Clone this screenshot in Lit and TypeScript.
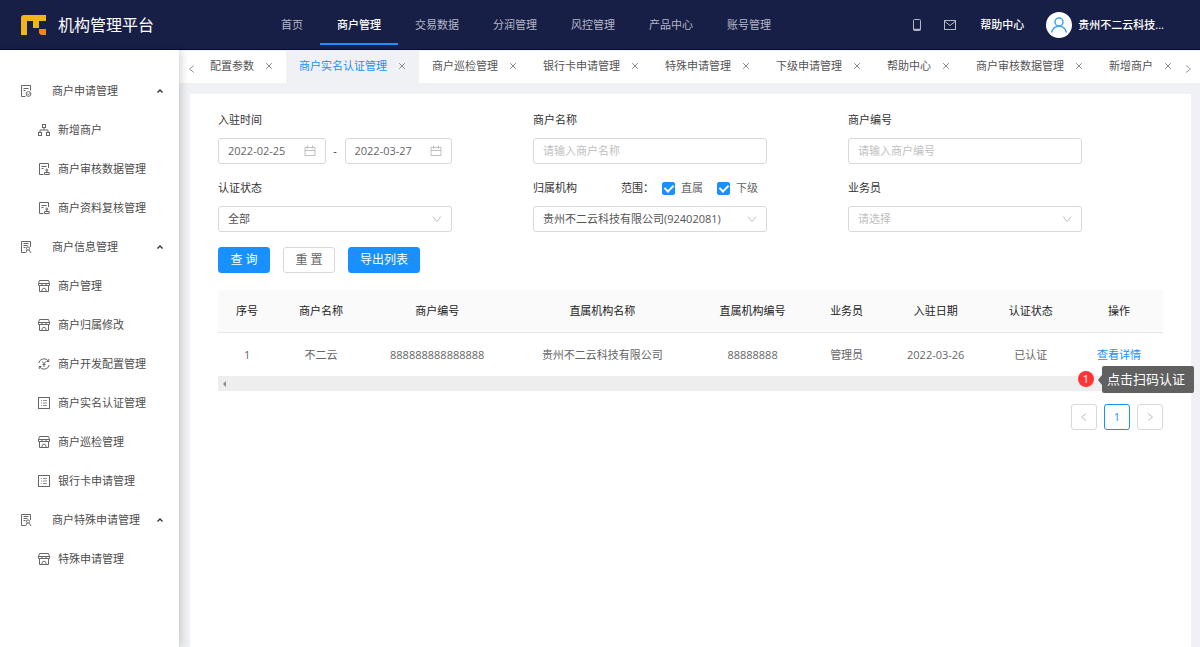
import { LitElement, html, css, svg } from "lit";
import { customElement } from "lit/decorators.js";
import { classMap } from "lit/directives/class-map.js";

const line = (body: unknown, size = 12) => html`<svg
  class="ico" width=${size} height=${size} viewBox="0 0 12 12" fill="none"
  stroke="currentColor" stroke-width="1" aria-hidden="true">${body}</svg>`;

const icons: Record<string, unknown> = {
  audit: line(svg`<path d="M5.500 11.500h-4V.5h9V5.500M3.500 3.500h5M3.500 5.500h2"/><circle cx="8.500" cy="9" r="2.400"/><path d="M7.400 9l.9.9 1.300-1.500"/>`),
  search: line(svg`<path d="M5 11.500H1.500V.5h9V6M3.500 2.500h5M3.500 4.500h4M3.500 6.500h2"/><circle cx="8" cy="7.500" r="1.600"/><path d="M5.500 12l1.600-3M11 12L9 9"/>`),
  tree: line(svg`<rect x="4.500" y=".5" width="3" height="3"/><rect x=".5" y="8.500" width="3" height="3"/><rect x="8.500" y="8.500" width="3" height="3"/><path d="M6 3.500V6M2 8.500V6h8v2.500"/>`),
  review: line(svg`<path d="M5.500 11.500h-4V.5h9V5M3.500 3.500h5M3.500 5.500h2"/><circle cx="8.800" cy="7" r="1"/><path d="M8.800 8v1.500M6.500 9.500h4.700v2H6.500z"/>`),
  shop: line(svg`<path d="M1.500.5h9l1 3v2H.5v-2zM.5 3.500h11M4 3.500v2M8 3.500v2M1.500 5.500v6h9v-6M4 11.500V9.500L6 8l2 1.500v2"/>`),
  yen: line(svg`<path d="M.8 5A5.300 5.300 0 0 1 10.500 3.300M11.200 7a5.300 5.300 0 0 1-9.700 1.700M10.800 1v2.500H8.500M1.200 11V8.500h2.300"/><path d="M4.300 3.500L6 5.800l1.700-2.300M6 5.800V9M4.500 6.500h3"/>`),
  list: line(svg`<rect x=".5" y=".5" width="11" height="11"/><path d="M3 3.500h1M5 3.500h4M3 6h1M5 6h4M3 8.500h1M5 8.500h4" stroke-opacity=".7"/>`),
};

const close = html`<svg class="close" width="8" height="8" viewBox="0 0 8 8" fill="none" stroke="currentColor" aria-hidden="true"><path d="M1.200 1.200l5.600 5.600M6.800 1.200L1.200 6.800"/></svg>`;
const left = html`<svg width="10" height="10" viewBox="0 0 10 10" fill="none" stroke="currentColor" aria-hidden="true"><path d="M7 1.500L2.500 5 7 8.500"/></svg>`;
const right = html`<svg width="10" height="10" viewBox="0 0 10 10" fill="none" stroke="currentColor" aria-hidden="true"><path d="M3 1.500L7.500 5 3 8.500"/></svg>`;
const down = html`<svg class="down" width="10" height="10" viewBox="0 0 10 10" fill="none" stroke="currentColor" aria-hidden="true"><path d="M1 2.500l4 5 4-5"/></svg>`;
const calendar = html`<svg width="12" height="12" viewBox="0 0 12 12" fill="none" stroke="currentColor" aria-hidden="true"><path d="M1 2.500h10v8H1zM1 5.500h10M3.500.5v3M8.500.5v3"/></svg>`;

const topNav = ["首页", "商户管理", "交易数据", "分润管理", "风控管理", "产品中心", "账号管理"];

const menu = [
  { icon: "audit", label: "商户申请管理", items: [["tree", "新增商户"], ["review", "商户审核数据管理"], ["review", "商户资料复核管理"]] },
  { icon: "search", label: "商户信息管理", items: [["shop", "商户管理"], ["shop", "商户归属修改"], ["yen", "商户开发配置管理"], ["list", "商户实名认证管理"], ["shop", "商户巡检管理"], ["list", "银行卡申请管理"]] },
  { icon: "search", label: "商户特殊申请管理", items: [["shop", "特殊申请管理"]] },
];

const tabs = ["配置参数", "商户实名认证管理", "商户巡检管理", "银行卡申请管理", "特殊申请管理", "下级申请管理", "帮助中心", "商户审核数据管理", "新增商户"];

const columns = [
  { title: "序号", weight: 58, value: "1" },
  { title: "商户名称", weight: 90, value: "不二云" },
  { title: "商户编号", weight: 142, value: "888888888888888" },
  { title: "直属机构名称", weight: 188, value: "贵州不二云科技有限公司" },
  { title: "直属机构编号", weight: 112, value: "88888888" },
  { title: "业务员", weight: 76, value: "管理员" },
  { title: "入驻日期", weight: 102, value: "2022-03-26" },
  { title: "认证状态", weight: 88, value: "已认证" },
  { title: "操作", weight: 88, value: html`<a class="link" href="#">查看详情</a>` },
];
const totalWeight = columns.reduce((sum, c) => sum + c.weight, 0);

const reset = css`
  * { box-sizing: border-box; }
  a { color: inherit; text-decoration: none; }
  button, input, select { font: inherit; color: inherit; margin: 0; }
  button { background: none; border: 0; padding: 0; cursor: pointer; }
  svg { display: block; flex: none; }
`;

@customElement("app-header")
class AppHeader extends LitElement {
  static styles = [reset, css`
    :host { display: flex; align-items: center; height: 50px; background: #181f47; border-bottom: 1px solid #070d33; color: #fff; }
    .brand { display: flex; align-items: center; gap: 12px; width: 264px; padding-left: 21px; flex: none; }
    .name { font-size: 16px; font-weight: 400; line-height: 24px; margin: 0; }
    .nav { display: flex; align-self: stretch; flex: 1; }
    .item { display: flex; align-items: center; height: 45px; padding: 4px 17px 0; color: #b4b7c6; border-top: 2px solid transparent; border-bottom: 2px solid transparent; white-space: nowrap; }
    .item.on { color: #fff; font-weight: 500; border-bottom-color: #1890ff; }
    .tools { display: flex; align-items: center; padding-right: 36px; font-weight: 500; white-space: nowrap; }
    .tool { color: #b4b7c6; display: flex; }
    .mail { margin: 0 24px 0 22px; }
    .user { display: flex; align-items: center; gap: 6px; margin-left: 22px; }
    .avatar { width: 26px; height: 26px; border-radius: 50%; background: #fff; }
  `];
  render() {
    return html`
      <div class="brand">
        <svg width="25" height="20" viewBox="0 0 25 20" aria-hidden="true">
          <path fill="#f2b41b" d="M3 0h22v6h-7v7h-6V6H6v14H0V3a3 3 0 0 1 3-3z"/>
          <path fill="#f08519" d="M18 14h7v6h-5l-2-2z"/>
        </svg>
        <h1 class="name">机构管理平台</h1>
      </div>
      <nav class="nav">
        ${topNav.map((t, i) => html`<a class=${classMap({ item: true, on: i === 1 })} href="#">${t}</a>`)}
      </nav>
      <div class="tools">
        <button class="tool" aria-label="手机"><svg width="10" height="12" viewBox="0 0 10 12" fill="none" stroke="currentColor"><rect x="1.500" y=".5" width="7" height="11" rx="1"/><path d="M1.500 10.500h7" stroke-width="1.500"/></svg></button>
        <button class="tool mail" aria-label="消息"><svg width="12" height="10" viewBox="0 0 12 10" fill="none" stroke="currentColor"><rect x=".5" y=".5" width="11" height="9"/><path d="M1 1.500l5 4 5-4"/></svg></button>
        <a href="#">帮助中心</a>
        <a class="user" href="#">
          <svg class="avatar" viewBox="0 0 26 26" fill="none" stroke="#3aa5f5" stroke-width="1.500" aria-hidden="true"><circle cx="13" cy="10" r="4"/><path d="M5.500 20.500c1-4 4-6.300 7.500-6.300s6.500 2.300 7.500 6.300"/></svg>
          <span>贵州不二云科技...</span>
        </a>
      </div>`;
  }
}

@customElement("side-menu")
class SideMenu extends LitElement {
  static styles = [reset, css`
    :host { display: block; width: 179px; flex: none; padding-top: 21px; background: #fff; color: #4d4d4d; box-shadow: 2px 0 8px rgba(0, 0, 0, 0.18); z-index: 1; }
    .row { display: flex; align-items: center; width: 100%; height: 39px; white-space: nowrap; text-align: left; }
    .group { padding: 0 15px 0 20px; }
    .group .ico { margin-right: 20px; }
    .sub { padding-left: 38px; gap: 8px; }
    .ico { color: #666; }
    .up { margin-left: auto; color: #333; }
  `];
  render() {
    return html`<nav>${menu.map((g) => html`
      <button class="row group" aria-expanded="true">${icons[g.icon]}<span>${g.label}</span>
        <svg class="up" width="8" height="8" viewBox="0 0 8 8" fill="none" stroke="currentColor" stroke-width="1.400" aria-hidden="true"><path d="M1.500 5.500L4 3l2.500 2.500"/></svg>
      </button>
      ${g.items.map(([icon, label]) => html`<a class="row sub" href="#">${icons[icon]}<span>${label}</span></a>`)}`)}</nav>`;
  }
}

@customElement("tab-bar")
class TabBar extends LitElement {
  static styles = [reset, css`
    :host { display: flex; height: 32px; background: #fff; color: #555; overflow: hidden; }
    .arrow { display: flex; align-items: center; justify-content: flex-end; width: 18px; padding-top: 4px; color: #999; flex: none; }
    .next { justify-content: flex-start; width: 17px; }
    .tabs { display: flex; flex: 1; min-width: 0; overflow: hidden; }
    .tab { display: flex; flex: 1 0 auto; align-items: center; gap: 11px; padding: 0 13px 2px; white-space: nowrap; }
    .on { background: #f0f1f5; color: #1890ff; }
    .x { color: #888; }
  `];
  render() {
    return html`
      <button class="arrow" aria-label="向左">${left}</button>
      <div class="tabs">${tabs.map((t, i) => html`
        <div class=${classMap({ tab: true, on: i === 1 })}><a href="#">${t}</a><button class="x" aria-label="关闭">${close}</button></div>`)}
      </div>
      <button class="arrow next" aria-label="向右">${right}</button>`;
  }
}

@customElement("filter-form")
class FilterForm extends LitElement {
  static styles = [reset, css`
    :host { display: block; color: #333; }
    .grid { display: grid; grid-template-columns: repeat(3, 1fr); column-gap: 81px; row-gap: 15px; padding-right: 81px; }
    .head { display: flex; align-items: center; height: 18px; margin-bottom: 9px; white-space: nowrap; }
    .range { margin-left: 44px; }
    .check { display: flex; align-items: center; gap: 6px; margin-left: 8px; color: #666; }
    .check + .check { margin-left: 14px; }
    .box { appearance: none; display: grid; place-items: center; width: 13px; height: 13px; border: 1px solid #d0d0d0; border-radius: 2px; }
    .box:checked { background: #1890ff; border-color: #1890ff; }
    .box:checked::before { content: ""; width: 4px; height: 7px; border: solid #fff; border-width: 0 2px 2px 0; transform: translateY(-1px) rotate(45deg); }
    .dates { display: grid; grid-template-columns: 1fr 19px 1fr; align-items: center; text-align: center; }
    .field { display: flex; align-items: center; height: 26px; border: 1px solid #d9d9d9; border-radius: 3px; padding-right: 9px; color: #bfbfbf; }
    .input { flex: 1; min-width: 0; width: 100%; height: 24px; border: 0; outline: 0; padding: 0 0 2px 9px; background: none; color: #666; }
    .input::placeholder { color: #bfbfbf; opacity: 1; }
    .select { display: grid; align-items: center; height: 26px; border: 1px solid #d9d9d9; border-radius: 3px; }
    .pick { grid-area: 1 / 1; appearance: none; width: 100%; height: 24px; border: 0; outline: 0; background: none; padding: 0 28px 0 9px; color: #555; }
    .pick.empty { color: #bfbfbf; }
    .down { grid-area: 1 / 1; justify-self: end; margin-right: 9px; color: #bfbfbf; pointer-events: none; }
    .actions { display: flex; gap: 13px; margin-top: 15px; }
    .btn { height: 26px; padding: 0 10px; border: 1px solid #d9d9d9; border-radius: 3px; color: #666; font-size: 12px; min-width: 52px; white-space: nowrap; }
    .primary { padding: 0 11px; background: #1890ff; border-color: #1890ff; color: #fff; }
  `];
  render() {
    return html`
      <form>
        <div class="grid">
          <div>
            <div class="head"><label for="from">入驻时间</label></div>
            <div class="dates">
              <div class="field"><input class="input" id="from" type="text" value="2022-02-25">${calendar}</div>
              <span>-</span>
              <div class="field"><input class="input" aria-label="结束时间" type="text" value="2022-03-27">${calendar}</div>
            </div>
          </div>
          <div>
            <div class="head"><label for="name">商户名称</label></div>
            <div class="field"><input class="input" id="name" type="text" placeholder="请输入商户名称"></div>
          </div>
          <div>
            <div class="head"><label for="code">商户编号</label></div>
            <div class="field"><input class="input" id="code" type="text" placeholder="请输入商户编号"></div>
          </div>
          <div>
            <div class="head"><label for="state">认证状态</label></div>
            <div class="select"><select class="pick" id="state"><option>全部</option></select>${down}</div>
          </div>
          <div>
            <div class="head">
              <label for="org">归属机构</label><span class="range">范围：</span>
              <label class="check"><input class="box" type="checkbox" checked>直属</label>
              <label class="check"><input class="box" type="checkbox" checked>下级</label>
            </div>
            <div class="select"><select class="pick" id="org"><option>贵州不二云科技有限公司(92402081)</option></select>${down}</div>
          </div>
          <div>
            <div class="head"><label for="agent">业务员</label></div>
            <div class="select"><select class="pick empty" id="agent"><option>请选择</option></select>${down}</div>
          </div>
        </div>
        <div class="actions">
          <button class="btn primary" type="button">查 询</button>
          <button class="btn" type="reset">重 置</button>
          <button class="btn primary" type="button">导出列表</button>
        </div>
      </form>`;
  }
}

@customElement("merchant-table")
class MerchantTable extends LitElement {
  static styles = [reset, css`
    :host { display: block; color: #666; }
    .table { width: 100%; table-layout: fixed; border-collapse: separate; border-spacing: 0; text-align: center; }
    .th { height: 43px; padding: 0; background: #fafafa; border-bottom: 1px solid #e8e8e8; color: #222; font-weight: 400; white-space: nowrap; }
    .td { height: 43px; padding: 0; white-space: nowrap; }
    .link { color: #1890ff; }
    .track { position: relative; height: 15px; background: #eee; display: flex; align-items: center; padding-left: 4px; }
    .badge { position: absolute; right: 69px; top: -5px; width: 16px; height: 16px; border-radius: 50%; background: #ff3434; color: #fff; line-height: 16px; text-align: center; }
    .tip { position: absolute; right: -31px; top: -10px; height: 27px; padding: 0 9px 0 5px; border-radius: 2px; background: #606060; color: #fff; font-size: 13px; line-height: 27px; white-space: nowrap; }
    .tip::before { content: ""; position: absolute; left: -4px; top: 9px; border: solid transparent; border-width: 5px 4px 5px 0; border-right-color: #606060; }
    .pages { display: flex; justify-content: flex-end; gap: 7px; margin-top: 13px; }
    .page { display: grid; place-items: center; width: 26px; height: 26px; border: 1px solid #d9d9d9; border-radius: 3px; color: #bfbfbf; }
    .page.on { border-color: #1890ff; color: #1890ff; font-weight: 500; }
  `];
  render() {
    return html`
      <table class="table">
        <colgroup>${columns.map((c) => html`<col style="width:${(c.weight / totalWeight) * 100}%">`)}</colgroup>
        <thead><tr>${columns.map((c) => html`<th class="th" scope="col">${c.title}</th>`)}</tr></thead>
        <tbody><tr>${columns.map((c) => html`<td class="td">${c.value}</td>`)}</tr></tbody>
      </table>
      <div class="track">
        <svg width="5" height="6" viewBox="0 0 5 6" aria-hidden="true"><path fill="#888" d="M4 0v6L1 3z"/></svg>
        <span class="badge">1</span>
        <span class="tip" role="tooltip">点击扫码认证</span>
      </div>
      <nav class="pages" aria-label="分页">
        <button class="page" aria-label="上一页">${left}</button>
        <button class="page on">1</button>
        <button class="page" aria-label="下一页">${right}</button>
      </nav>`;
  }
}

@customElement("app-root")
class AppRoot extends LitElement {
  static styles = [reset, css`
    :host { display: flex; flex-direction: column; min-height: 100vh; background: #f0f1f5; font-family: "Open Sans", "Noto Sans CJK SC", sans-serif; font-size: 11px; line-height: 18px; }
    .body { display: flex; flex: 1; }
    .main { display: flex; flex-direction: column; flex: 1; min-width: 0; padding-top: 1px; }
    .card { flex: 1; margin: 11px 9px 0 11px; padding: 17px 28px 28px 28px; background: #fff; }
    .results { margin-top: 17px; }
  `];
  render() {
    return html`
      <app-header></app-header>
      <div class="body">
        <side-menu></side-menu>
        <main class="main">
          <tab-bar></tab-bar>
          <section class="card">
            <filter-form></filter-form>
            <merchant-table class="results"></merchant-table>
          </section>
        </main>
      </div>`;
  }
}
